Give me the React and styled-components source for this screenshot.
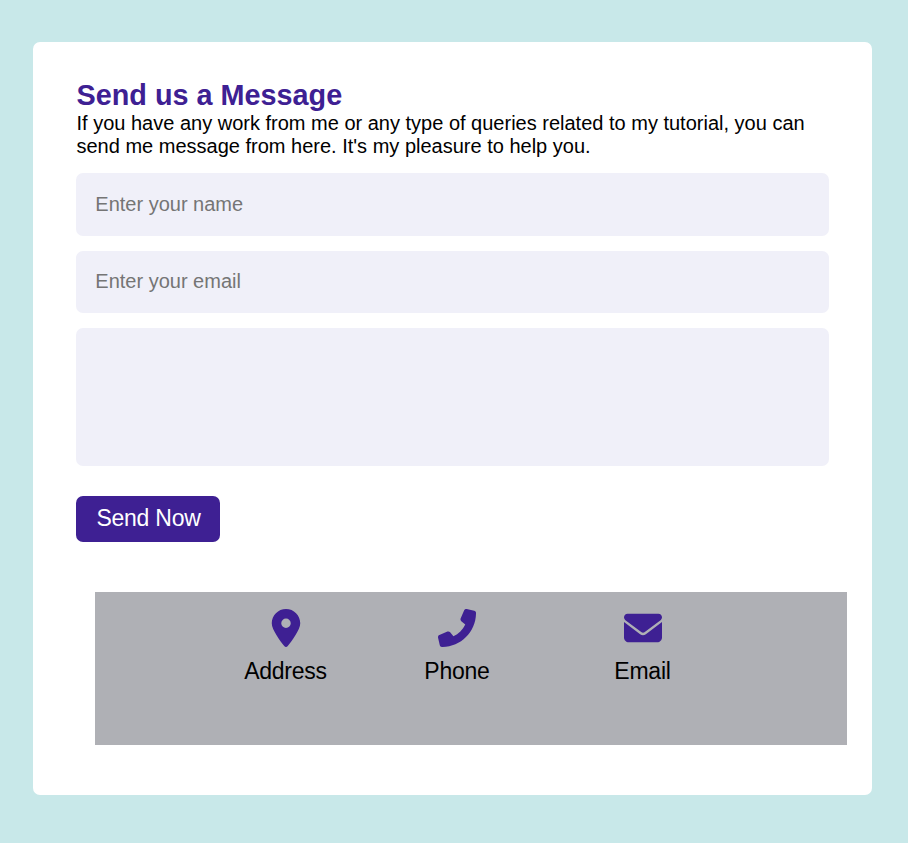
import React from "react";
import styled, { createGlobalStyle } from "styled-components";
import { FaLocationDot, FaEnvelope } from "react-icons/fa6";

const GlobalStyle = createGlobalStyle`
  * { margin: 0; padding: 0; box-sizing: border-box; }
  body {
    background: #c8e8e9;
    font-family: "Liberation Sans", Arial, sans-serif;
    color: #000;
  }
`;

const Page = styled.main`
  min-height: 843px;
  padding: 42px 36px 48px 33px;
`;

const Card = styled.section`
  height: 753px;
  padding: 37px 43px 0;
  background: #fff;
  border-radius: 7px;
`;

const Title = styled.h1`
  padding-left: 0.5px;
  font-size: 28.8px;
  line-height: 33px;
  font-weight: 700;
  color: #3e2093;
`;

const Intro = styled.p`
  padding-left: 0.5px;
  font-size: 20px;
  line-height: 23px;
  white-space: nowrap;
`;

const Form = styled.form`
  display: flex;
  flex-direction: column;
  align-items: flex-start;
  gap: 15px;
  margin-top: 15px;
`;

const Input = styled.input`
  width: 753px;
  height: ${(p) => p.$height}px;
  padding: 0 19px ${(p) => p.$padBottom || 0}px 19.3px;
  border: none;
  border-radius: 7px;
  background: #f0f0f9;
  font-family: inherit;
  font-size: 20px;
  &::placeholder { color: #757575; }
`;

const Message = styled.textarea`
  display: block;
  width: 753px;
  height: 138px;
  border: none;
  border-radius: 7px;
  background: #f0f0f9;
  resize: none;
`;

const Button = styled.button`
  width: 144px;
  height: 46px;
  margin-top: 15px;
  padding: 0 0 2px 1px;
  border: none;
  border-radius: 7px;
  background: #3e2093;
  color: #fff;
  font-family: inherit;
  font-size: 23px;
  letter-spacing: -0.25px;
`;

const Contacts = styled.div`
  display: flex;
  align-items: flex-start;
  width: 752px;
  height: 153px;
  margin: 50px 0 0 19px;
  padding: 17px 0 0 149px;
  background: #afb0b5;
`;

const Contact = styled.div`
  display: flex;
  flex-direction: column;
  align-items: center;
  width: ${(p) => p.$width}px;
  margin-right: ${(p) => p.$gap}px;
  font-size: 23px;
  letter-spacing: -0.25px;
  line-height: 26px;
  white-space: nowrap;

  svg {
    width: 38px;
    height: 38px;
    margin-bottom: 11px;
    color: #3e2093;
  }
`;

const PhoneIcon = () => (
  <svg viewBox="0 0 512 512" fill="currentColor" aria-hidden="true">
    <path d="M18.92 351.2l108.5-46.52c12.78-5.531 27.77-1.801 36.45 8.98l44.09 53.82c69.25-34 125.5-90.31 159.6-159.5l-53.81-44.04c-10.75-8.781-14.41-23.69-8.974-36.47l46.51-108.5c6.094-13.91 21.1-21.52 35.79-18.11l100.8 23.25c14.25 3.25 24.22 15.8 24.22 30.46c0 252.3-205.2 457.5-457.5 457.5c-14.67 0-27.18-9.968-30.45-24.22l-23.27-100.8C-2.571 372.4 5.018 357.2 18.92 351.2z" />
  </svg>
);

const contacts = [
  { label: "Address", Icon: FaLocationDot, width: 83, gap: 97 },
  { label: "Phone", Icon: PhoneIcon, width: 66, gap: 124 },
  { label: "Email", Icon: FaEnvelope, width: 57, gap: 0 },
];

export default function App() {
  return (
    <>
      <GlobalStyle />
      <Page>
        <Card>
          <Title>Send us a Message</Title>
          <Intro>
            If you have any work from me or any type of queries related to my tutorial, you can
            <br />
            send me message from here. It's my pleasure to help you.
          </Intro>
          <Form onSubmit={(e) => e.preventDefault()}>
            <Input $height={63} type="text" placeholder="Enter your name" />
            <Input $height={62} $padBottom={2} type="text" placeholder="Enter your email" />
            <Message aria-label="Message" />
            <Button>Send Now</Button>
          </Form>
          <Contacts>
            {contacts.map(({ label, Icon, width, gap }) => (
              <Contact key={label} $width={width} $gap={gap}>
                <Icon />
                <span>{label}</span>
              </Contact>
            ))}
          </Contacts>
        </Card>
      </Page>
    </>
  );
}
